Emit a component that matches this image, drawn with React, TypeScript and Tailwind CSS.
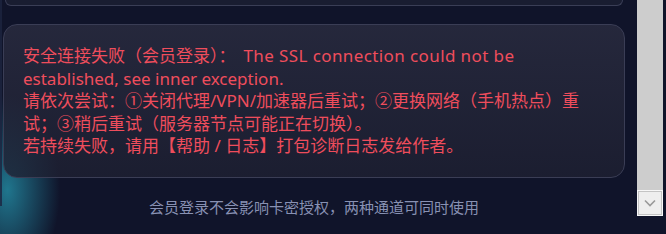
const font = "font-['Noto_Sans','Noto_Sans_CJK_SC',sans-serif]"

const ScrollBar = () => (
  <div className="flex w-[26px] flex-col">
    <div className="h-[190px] bg-[#cdcdcd]" />
    <div className="flex h-[26px] items-center justify-center border border-[#f7f7f7] bg-[#f7f7f7]">
      <div className="flex h-full w-full items-center justify-center border border-[#c4c4c4] bg-[#eeeeee]">
        <svg width="12" height="8" viewBox="0 0 12 8" fill="none">
          <path d="M1 1.5 6 6.5l5-5" stroke="#9a9a9a" strokeWidth="1.6" />
        </svg>
      </div>
    </div>
  </div>
)

export default function App() {
  return (
    <div className={`relative h-[234px] w-[666px] overflow-hidden bg-[#10142a] ${font}`}>
      <div className="pointer-events-none absolute left-[-45px] top-[95px] h-[190px] w-[105px] rounded-full bg-[radial-gradient(closest-side,rgba(40,170,195,0.65),rgba(40,165,190,0.3)_55%,transparent)]" />
      <div className="pointer-events-none absolute left-0 top-0 h-[206px] w-[2px] bg-[#1d2440]/80" />
      <div className="relative flex h-full">
        <div className="w-[637px]">
          <div className="ml-[5px] h-[6px] w-[618px] rounded-b-[12px] border-x border-b border-[#3a3e56] bg-[#1c1f33]/80" />
          <div className="ml-[3px] mt-[18px] w-[622px] rounded-[14px] border border-[#3a3d55] bg-[linear-gradient(180deg,rgba(41,43,63,0.85),rgba(30,32,50,0.8))] pb-[19px] pl-[19px] pr-5 pt-5">
            <p className="whitespace-pre-line text-[17px] leading-[22.5px] text-[#ef4d5c]">
              安全连接失败（会员登录）：
              <span className="ml-[8px] tracking-[0.4px]">The SSL connection could not be</span>
              {" established, see inner exception.\n请依次尝试：①关闭代理/VPN/加速器后重试；②更换网络（手机热点）重试；③稍后重试（服务器节点可能正在切换）。\n若持续失败，请用【帮助 / 日志】打包诊断日志发给作者。"}
            </p>
          </div>
          <p className="ml-[3px] mt-[19px] w-[622px] text-center text-[15px] leading-[20px] text-[#8891b3]">
            会员登录不会影响卡密授权，两种通道可同时使用
          </p>
        </div>
        <ScrollBar />
      </div>
    </div>
  )
}
